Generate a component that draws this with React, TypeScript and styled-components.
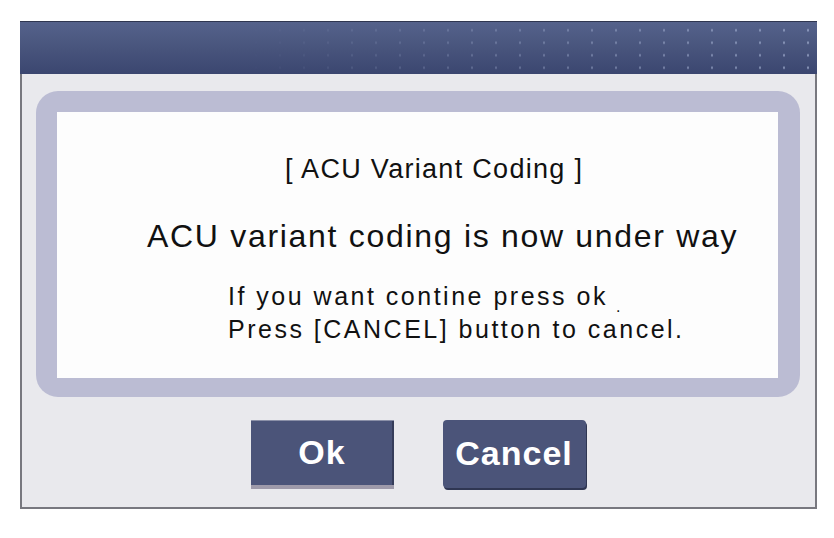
import React from 'react';
import styled, { createGlobalStyle } from 'styled-components';

const GlobalStyle = createGlobalStyle`
  html, body {
    margin: 0;
    padding: 0;
    background: #ffffff;
  }
  body {
    font-family: 'Liberation Sans', Arial, sans-serif;
  }
`;

const Frame = styled.div`
  width: 797px;
  margin: 21px 0 0 20px;
  display: flex;
  flex-direction: column;
`;

const Header = styled.div`
  position: relative;
  height: 53px;
  border-top: 1px solid #2f3650;
  box-sizing: border-box;
  background: linear-gradient(#55628b, #47537b 55%, #3b4670);
  overflow: hidden;

  &::after {
    content: '';
    position: absolute;
    inset: 0;
    background-image: radial-gradient(circle, rgba(170, 182, 215, 0.7) 0.9px, transparent 1.4px);
    background-size: 24px 12.5px;
    background-position: 8px 2px;
    -webkit-mask-image: linear-gradient(90deg, transparent 28%, rgba(0, 0, 0, 0.5) 60%, #000 100%);
    mask-image: linear-gradient(90deg, transparent 28%, rgba(0, 0, 0, 0.5) 60%, #000 100%);
  }
`;

const Body = styled.div`
  display: flex;
  flex-direction: column;
  align-items: stretch;
  background: #e9e9ed;
  border: 2px solid #78787f;
  border-top: none;
  padding: 17px 15px 18px 14px;
`;

const Panel = styled.div`
  background: #bbbcd3;
  border-radius: 22px;
  padding: 21px 22px 19px 21px;
`;

const Sheet = styled.div`
  height: 266px;
  box-sizing: border-box;
  background: #fdfdfd;
  padding-top: 44px;
  display: flex;
  flex-direction: column;
  align-items: flex-start;
  color: #111111;
`;

const Title = styled.div`
  margin-left: 228px;
  font-size: 27px;
  line-height: 27px;
  letter-spacing: 1.3px;
  white-space: pre;
`;

const Headline = styled.div`
  margin: 37px 0 0 90px;
  font-size: 32px;
  line-height: 32px;
  letter-spacing: 1.7px;
  white-space: pre;
`;

const Note = styled.div<{ $gap: number }>`
  margin: ${(p) => p.$gap}px 0 0 171px;
  font-size: 25px;
  line-height: 25px;
  letter-spacing: 2.5px;
  white-space: pre;
`;

const StrayDot = styled.span`
  display: inline-block;
  position: relative;
  top: 7px;
  margin-left: 8px;
  font-size: 16px;
  line-height: 0;
`;

const ButtonRow = styled.div`
  display: flex;
  justify-content: center;
  gap: 49px;
  margin-top: 23px;
`;

const Button = styled.button<{ $pressed?: boolean }>`
  width: 143px;
  height: 69px;
  box-sizing: border-box;
  background: #4b5479;
  color: #ffffff;
  font-family: 'Liberation Sans', Arial, sans-serif;
  font-weight: bold;
  font-size: 34px;
  letter-spacing: 1px;
  padding: 0 0 2px;
  cursor: pointer;
  border: none;
  ${(p) =>
    p.$pressed
      ? `
    border-top: 1px solid #8b90a8;
    border-bottom: 4px solid #9e9aaa;
    box-shadow: inset -2px 0 0 #363d5a;
    border-radius: 0;
  `
      : `
    height: 68px;
    border-radius: 4px;
    box-shadow: 1px 2px 0 #2f3652;
  `}
`;

export default function App() {
  return (
    <>
      <GlobalStyle />
      <Frame>
        <Header />
        <Body>
          <Panel>
            <Sheet>
              <Title>[ ACU Variant Coding ]</Title>
              <Headline>ACU variant coding is now under way</Headline>
              <Note $gap={32}>
                If you want contine press ok<StrayDot>.</StrayDot>
              </Note>
              <Note $gap={8}>Press [CANCEL] button to cancel.</Note>
            </Sheet>
          </Panel>
          <ButtonRow>
            <Button $pressed>Ok</Button>
            <Button>Cancel</Button>
          </ButtonRow>
        </Body>
      </Frame>
    </>
  );
}
